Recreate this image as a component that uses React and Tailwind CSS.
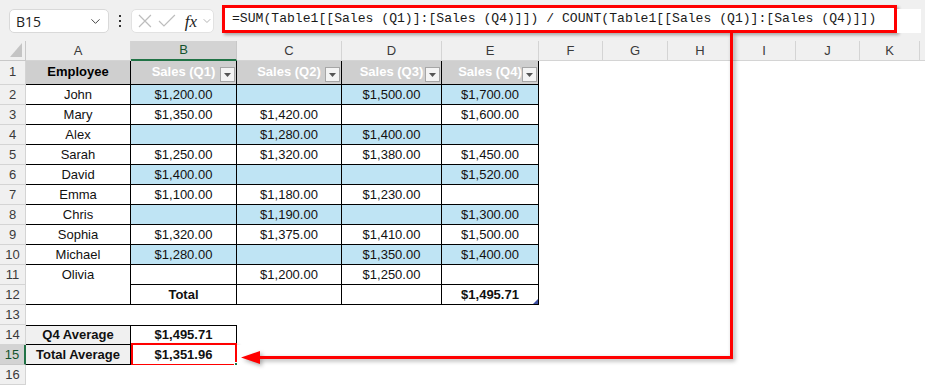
import { ChevronDown } from 'lucide-react'

const letters = ['A', 'B', 'C', 'D', 'E', 'F', 'G', 'H', 'I', 'J', 'K']

const table = {
  1: ['Employee', 'Sales (Q1)', 'Sales (Q2)', 'Sales (Q3)', 'Sales (Q4)'],
  2: ['John', '$1,200.00', '', '$1,500.00', '$1,700.00'],
  3: ['Mary', '$1,350.00', '$1,420.00', '', '$1,600.00'],
  4: ['Alex', '', '$1,280.00', '$1,400.00', ''],
  5: ['Sarah', '$1,250.00', '$1,320.00', '$1,380.00', '$1,450.00'],
  6: ['David', '$1,400.00', '', '', '$1,520.00'],
  7: ['Emma', '$1,100.00', '$1,180.00', '$1,230.00', ''],
  8: ['Chris', '', '$1,190.00', '', '$1,300.00'],
  9: ['Sophia', '$1,320.00', '$1,375.00', '$1,410.00', '$1,500.00'],
  10: ['Michael', '$1,280.00', '', '$1,350.00', '$1,400.00'],
  11: ['Olivia', '', '$1,200.00', '$1,250.00', ''],
  12: ['', 'Total', '', '', '$1,495.71'],
  14: ['Q4 Average', '$1,495.71'],
  15: ['Total Average', '$1,351.96'],
}

function FilterButton() {
  return (
    <div className="absolute right-[1px] bottom-[2px] w-[15px] h-[15px] bg-[#f4f4f4] border border-[#a6a6a6] flex items-center justify-center">
      <svg width="7" height="4" viewBox="0 0 7 4">
        <polygon points="0,0 7,0 3.5,4" fill="#555" />
      </svg>
    </div>
  )
}

function cellClass(r, c) {
  const base = 'relative flex justify-center whitespace-nowrap text-[13px] text-[#111]'
  if (r === 1 && c <= 4) {
    return base + ' items-end pb-[3px] bg-[#cfcfcf] border-r border-b border-black font-bold' + (c === 0 ? ' text-black' : ' !text-white')
  }
  if (r >= 2 && r <= 11 && c <= 4) {
    if (r === 11 && c === 0) return base + ' items-center border-r border-black'
    const blue = r % 2 === 0 && c >= 1
    return base + ' items-center border-r border-b border-black' + (blue ? ' bg-[#bfe4f4]' : ' bg-white')
  }
  if (r === 12 && c <= 4) {
    return base + ' items-center border-r border-b border-black' + (c === 1 || c === 4 ? ' font-bold' : '')
  }
  if ((r === 14 || r === 15) && c <= 1) {
    return (
      base +
      ' items-center border-r border-b border-black font-bold' +
      (r === 14 ? ' border-t' : '') +
      (c === 0 ? ' bg-[#f0f0f0]' : ' bg-white')
    )
  }
  return base + ' items-center bg-white'
}

function Cell({ r, c }) {
  const text = table[r] ? table[r][c] || '' : ''
  return (
    <div className={cellClass(r, c)}>
      {text}
      {r === 1 && c >= 1 && c <= 4 && <FilterButton />}
      {r === 12 && c === 4 && (
        <svg className="absolute right-0 bottom-0" width="5" height="5" viewBox="0 0 5 5">
          <polygon points="5,0 5,5 0,5" fill="#3e4fa3" />
        </svg>
      )}
      {r === 15 && c === 1 && (
        <>
          <div className="absolute left-0 right-[-1px] top-[-2px] bottom-[-2px] border-2 border-[#f00] shadow-[2px_2px_3px_rgba(0,0,0,0.3)]" />
          <div className="absolute right-[-4px] bottom-[-4px] w-[6px] h-[6px] bg-[#217346] border border-white" />
        </>
      )}
    </div>
  )
}

export default function App() {
  const rowNums = Array.from({ length: 16 }, (_, i) => i + 1)

  return (
    <div className="relative w-[925px] h-[385px] overflow-hidden bg-white font-['Liberation_Sans',Arial,sans-serif]">
      {/* Name box + formula bar */}
      <div className="h-[41px] bg-[#f0f0f0] flex items-end pb-[8px]">
        <div className="ml-[9px] w-[100px] h-[24px] bg-white rounded-[5px] border border-[#d9d9d9] flex items-center justify-between pl-[6px] pr-[5px]">
          <span className="text-[14px] text-[#222] font-['Open_Sans',sans-serif]">B15</span>
          <ChevronDown size={15} strokeWidth={1.6} className="text-[#444]" />
        </div>
        <div className="ml-[10px] h-[24px] flex flex-col justify-center items-center gap-[3px]">
          <div className="w-[2px] h-[2px] bg-[#333]" />
          <div className="w-[2px] h-[2px] bg-[#333]" />
          <div className="w-[2px] h-[2px] bg-[#333]" />
        </div>
        <div className="ml-[10px] w-[83px] h-[24px] bg-white rounded-[5px] border border-[#e2e2e2] flex items-center pl-[5px]">
          <svg width="14" height="14" viewBox="0 0 14 14" className="ml-px">
            <path d="M1 1 L13 13 M13 1 L1 13" stroke="#bdbdbd" strokeWidth="1.2" />
          </svg>
          <svg width="18" height="14" viewBox="0 0 18 14" className="ml-[6px]">
            <path d="M1 7 L6 12 L17 1" stroke="#bdbdbd" strokeWidth="1.2" fill="none" />
          </svg>
          <span className="ml-[9px] text-[17px] leading-none italic text-[#222] font-['Liberation_Serif',serif]">fx</span>
          <ChevronDown size={12} strokeWidth={1.5} className="ml-[4px] text-[#9a9a9a]" />
        </div>
        <div className="ml-[8px] w-[675px] h-[28px] bg-white border-[3px] border-[#f00] shadow-[2px_2px_3px_rgba(0,0,0,0.3)] flex items-center pl-[7px]">
          <span className="whitespace-pre text-[13.1px] text-[#1a1a1a] font-['Liberation_Mono',monospace]">
            =SUM(Table1[[Sales (Q1)]:[Sales (Q4)]]) / COUNT(Table1[[Sales (Q1)]:[Sales (Q4)]])
          </span>
        </div>
        <div className="w-[24px] h-[24px] bg-white" />
      </div>

      {/* Sheet grid */}
      <div className="grid grid-cols-[26px_105px_106px_105px_100px_97px_64px_65px_65px_63px_64px_60px_1fr] grid-rows-[20px_24px_repeat(15,20px)]">
        <div className="relative bg-[#f0f0f0] border-r border-b border-[#c8c8c8]">
          <svg className="absolute right-[3px] bottom-[3px]" width="12" height="14" viewBox="0 0 12 14">
            <polygon points="12,0 12,14 0,14" fill="#c4c4c4" />
          </svg>
        </div>
        {letters.map((l) =>
          l === 'B' ? (
            <div key={l} className="flex items-center justify-center bg-[#d3d3d3] border-r border-[#c8c8c8] border-b-2 border-b-[#217346] text-[13px] text-[#14532d]">
              {l}
            </div>
          ) : (
            <div key={l} className="flex items-center justify-center bg-[#f0f0f0] border-r border-b border-[#d4d4d4] text-[13px] text-[#3a3a3a]">
              {l}
            </div>
          ),
        )}
        <div className="bg-[#f0f0f0] border-b border-[#d4d4d4]" />

        {rowNums.map((r) => (
          <div key={r} className="contents">
            {r === 15 ? (
              <div className="flex items-center justify-center bg-[#d3d3d3] border-b border-[#c8c8c8] border-r-2 border-r-[#217346] text-[13px] text-[#14532d]">
                {r}
              </div>
            ) : (
              <div className={'flex justify-center bg-[#f0f0f0] border-r border-b border-[#d4d4d4] text-[13px] text-[#3a3a3a]' + (r === 1 ? ' items-end pb-[3px]' : ' items-center')}>
                {r}
              </div>
            )}
            {letters.map((l, c) => (
              <Cell key={l} r={r} c={c} />
            ))}
            <div className="bg-white" />
          </div>
        ))}
      </div>

      {/* Annotation arrow */}
      <svg
        className="absolute left-0 top-0 pointer-events-none drop-shadow-[2px_2px_2px_rgba(0,0,0,0.35)]"
        width="925"
        height="385"
        viewBox="0 0 925 385"
      >
        <path d="M731.5 33 V357.5 H256" stroke="#f00" strokeWidth="3" fill="none" />
        <polygon points="241,357.5 260,351 260,364" fill="#f00" />
      </svg>
    </div>
  )
}
